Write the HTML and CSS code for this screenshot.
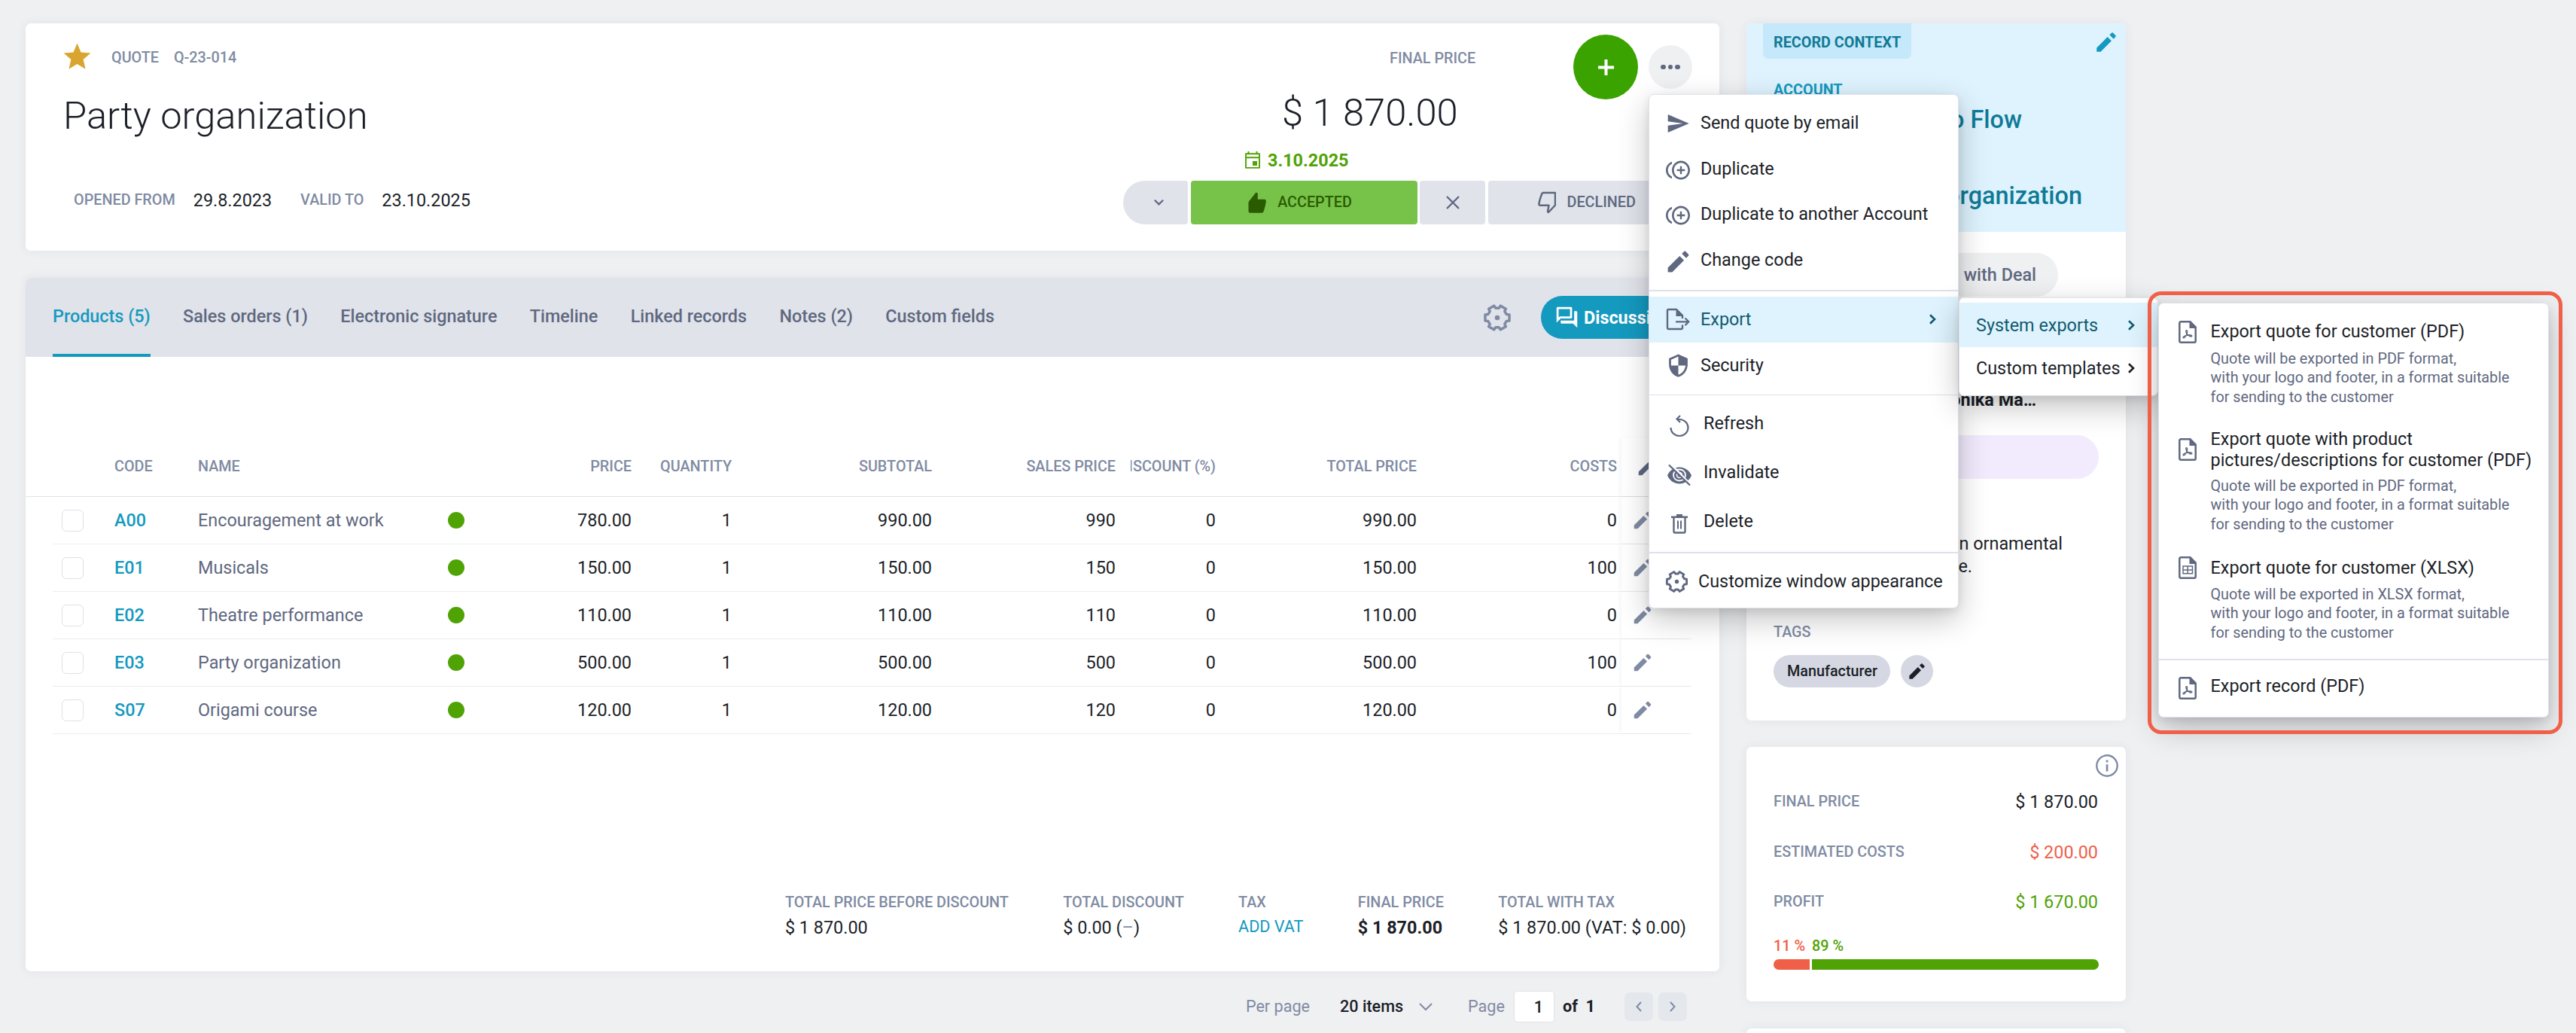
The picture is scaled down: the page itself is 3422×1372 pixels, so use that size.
FILE: index.html
```html
<!DOCTYPE html>
<html lang="en">
<head>
<meta charset="utf-8">
<title>Party organization</title>
<link rel="stylesheet" href="styles.css">
</head>
<body>
<svg class="defs" width="0" height="0">
  <symbol id="i-star" viewBox="0 0 24 24"><path d="M12 17.27L18.18 21l-1.64-7.03L22 9.24l-7.19-.61L12 2 9.19 8.63 2 9.24l5.46 4.73L5.82 21z"/></symbol>
  <symbol id="i-edit" viewBox="0 0 24 24"><path d="M3 17.25V21h3.75L16.9 10.85 13.15 7.1zM20.71 7.04c.39-.39.39-1.02 0-1.41l-2.34-2.34c-.39-.39-1.02-.39-1.41 0l-1.9 1.9 3.75 3.75z"/></symbol>
  <symbol id="i-send" viewBox="0 0 24 24"><path d="M2.01 21L23 12 2.01 3 2 10l15 2-15 2z"/></symbol>
  <symbol id="i-dup" viewBox="0 0 24 24"><path d="M15.9 8h-1.8v3.1H11v1.8h3.1V16h1.8v-3.1H19v-1.8h-3.1zM2 12c0-2.79 1.64-5.2 4.01-6.32V3.52C2.52 4.76 0 8.09 0 12s2.52 7.24 6.01 8.48v-2.16C3.64 17.2 2 14.79 2 12zm13-9.4c-4.96 0-9 4.24-9 9.4s4.04 9.4 9 9.4 9-4.24 9-9.4-4.04-9.4-9-9.4zm0 16.8c-3.86 0-7-3.34-7-7.4s3.14-7.4 7-7.4 7 3.34 7 7.4-3.14 7.4-7 7.4z"/></symbol>
  <symbol id="i-shield" viewBox="0 0 24 24"><path d="M12 1L3 5v6c0 5.55 3.84 10.74 9 12 5.16-1.26 9-6.45 9-12V5l-9-4zm0 10.99h7c-.53 4.12-3.28 7.79-7 8.94V12H5V6.3l7-3.11v8.8z"/></symbol>
  <symbol id="i-export" viewBox="0 0 32 30"><path d="M22 22.5v4a1.5 1.5 0 0 1-1.500 1.500H3.500A1.500 1.500 0 0 1 2 26.500V3.500A1.500 1.500 0 0 1 3.500 2H14l8 8v4" fill="none" stroke="currentColor" stroke-width="2.400"/><path d="M13.500 1.500l9.500 9.500h-9.500z"/><path d="M13 18.300h17M25.500 13.500l4.800 4.800-4.800 4.800" fill="none" stroke="currentColor" stroke-width="2.200"/></symbol>
  <symbol id="i-refresh" viewBox="0 0 26 30"><path d="M1.500 17a11.500 11 0 1 0 11.500-11h-3M14 1L9.500 5.500l4.500 4.500" fill="none" stroke="currentColor" stroke-width="2.200"/></symbol>
  <symbol id="i-hide" viewBox="0 0 32 30"><path d="M0 15.500C3 8.500 9 4.500 16 4.500s13 4 16 11c-3 7-9 11-16 11s-13-4-16-11z"/><ellipse cx="16" cy="15" rx="8" ry="7.500" fill="none" stroke="#fff" stroke-width="1.800"/><ellipse cx="16" cy="15" rx="3.500" ry="3.500" fill="none" stroke="#fff" stroke-width="1.600"/><path d="M5 1l26 27" stroke="#fff" stroke-width="3"/><path d="M2 1.500l28 27" stroke="currentColor" stroke-width="2.400"/></symbol>
  <symbol id="i-trash" viewBox="0 0 22 26"><path d="M0 3.800h22M7 1.300h8M3.500 4v19a1.500 1.500 0 0 0 1.500 1.500h12a1.500 1.500 0 0 0 1.500-1.500V4" fill="none" stroke="currentColor" stroke-width="2.400"/><path d="M9 8.500v11M13 8.500v11" stroke="currentColor" stroke-width="2"/></symbol>
  <symbol id="i-gear" viewBox="-12 -12 24 24"><path d="M10.140-2.600V2.600L7.700 2.900 6.200 5.300 7.200 7.420 2.800 10 1.300 8.100H-1.300L-2.800 10-7.200 7.420-6.200 5.300-7.700 2.900-10.140 2.600V-2.600L-7.700-2.900-6.200-5.300-7.200-7.420-2.800-10-1.300-8.100H1.300L2.800-10 7.200-7.420 6.200-5.300 7.700-2.900z" fill="none" stroke="currentColor" stroke-width="2.200" stroke-linejoin="round"/><circle r="2.100"/></symbol>
  <symbol id="i-pdf" viewBox="0 0 24 30"><path d="M1.300 3A1.700 1.700 0 0 1 3 1.300h12.500l7.200 7.200V27a1.700 1.700 0 0 1-1.700 1.700H3A1.700 1.700 0 0 1 1.300 27z" fill="none" stroke="currentColor" stroke-width="2.500"/><path d="M14.500 1l9 9h-9z"/><path d="M11.300 17.500C9.600 15.200 9.300 13 10.400 12.700c1.400-.2 1.600 2.300.6 4.900-1 2.500-2.700 5-4.100 5.200-1.400 0-1-1.700 1.400-2.600 2.200-.9 5.500-1.400 7.700-1.200 2 .2 2.400 1.700 1 1.900-1.700.2-4-1.300-5.700-3.400z" fill="none" stroke="currentColor" stroke-width="1.400"/></symbol>
  <symbol id="i-xls" viewBox="0 0 24 30"><path d="M1.300 3A1.700 1.700 0 0 1 3 1.300h12.500l7.200 7.200V27a1.700 1.700 0 0 1-1.700 1.700H3A1.700 1.700 0 0 1 1.300 27z" fill="none" stroke="currentColor" stroke-width="2.500"/><path d="M14.500 1l9 9h-9z"/><path d="M6 13h12.500v9.800H6zM12.200 13v9.800M6 17.900h12.500" fill="none" stroke="currentColor" stroke-width="1.500"/></symbol>
  <symbol id="i-right" viewBox="0 0 10 14"><path d="M2 1.200L8 7l-6 5.800" fill="none" stroke="currentColor" stroke-width="2.600"/></symbol>
  <symbol id="i-forum" viewBox="0 0 24 24"><path d="M15 4v7H5.170L4 12.170V4h11m1-2H3c-.55 0-1 .45-1 1v14l4-4h10c.55 0 1-.45 1-1V3c0-.55-.45-1-1-1zm5 4h-2v9H6v2c0 .55.45 1 1 1h11l4 4V7c0-.55-.45-1-1-1z"/></symbol>
  <symbol id="i-cal" viewBox="0 0 22 24"><path d="M2 3.300h18v18.600H2zM2 8.300h18M5.500 0v3.500M16.500 0v3.500" fill="none" stroke="currentColor" stroke-width="1.900" stroke-linejoin="round"/><path d="M11 13h6v6h-6z"/></symbol>
  <symbol id="i-up" viewBox="0 0 24 29"><path d="M1 13L10.500 1l2.300 1.200v8H21.500c1.600 0 2.500 1.200 2.300 2.800-.5 5-1.700 9-3.300 13.500-.5 1-1.200 1.700-2.500 1.700H3a2.500 2.500 0 0 1-2.500-2.500V15c0-.8.1-1.400.5-2z"/></symbol>
  <symbol id="i-down" viewBox="0 0 24 30"><path d="M7.500 2H23v16.500L14 28l-1-1 1.500-8.200H3a1.600 1.600 0 0 1-1.600-1.800C2 12 3.500 8 5.200 3.500 5.600 2.500 6.300 2 7.500 2z" fill="none" stroke="currentColor" stroke-width="2.500" stroke-linejoin="round"/></symbol>
  <symbol id="i-info" viewBox="0 0 30 30"><circle cx="15" cy="15" r="13.700" fill="none" stroke="currentColor" stroke-width="2.400"/><path d="M13.700 13.200h2.700v9.300h-2.700zM13.700 7.500h2.700v2.900h-2.700z"/></symbol>
</svg>

<div class="page">
  <main class="main">
    <header class="card record">
      <div class="record-info">
        <div class="record-kind"><svg class="star"><use href="#i-star"/></svg><span>QUOTE</span><span class="record-code">Q-23-014</span></div>
        <h1>Party organization</h1>
        <div class="dates"><span class="label">OPENED FROM</span><b>29.8.2023</b><span class="label valid">VALID TO</span><b>23.10.2025</b></div>
      </div>
      <div class="record-state">
        <div class="state-top">
          <div class="prices">
            <div class="label price-label">FINAL PRICE</div>
            <div class="price">$ 1 870.00</div>
            <div class="due"><svg class="cal"><use href="#i-cal"/></svg>3.10.2025</div>
          </div>
          <div class="actions">
            <button class="add"><svg viewBox="0 0 24 24"><path d="M12 1v22M1 12h22"/></svg></button>
            <button class="more"><i></i><i></i><i></i></button>
          </div>
        </div>
        <div class="stages">
          <div class="stage first"><svg class="v" viewBox="0 0 16 10"><path d="M2 1.500l6 6 6-6"/></svg></div>
          <div class="stage accepted"><svg class="thumb"><use href="#i-up"/></svg>ACCEPTED</div>
          <div class="stage cross"><svg viewBox="0 0 18 18"><path d="M1 1l16 16M17 1L1 17"/></svg></div>
          <div class="stage declined"><svg class="thumb"><use href="#i-down"/></svg>DECLINED</div>
        </div>
      </div>
    </header>

    <section class="card products">
      <nav class="tabs">
        <a class="active">Products (5)</a><a>Sales orders (1)</a><a>Electronic signature</a><a>Timeline</a><a>Linked records</a><a>Notes (2)</a><a>Custom fields</a>
        <svg class="gear"><use href="#i-gear"/></svg>
        <button class="discussion"><svg><use href="#i-forum"/></svg>Discussion</button>
      </nav>
      <div class="grid-head">
        <span></span><span>CODE</span><span>NAME</span><span></span><span class="n">PRICE</span><span class="n">QUANTITY</span><span class="n">SUBTOTAL</span><span class="n">SALES PRICE</span><span class="n clip">DISCOUNT (%)</span><span class="n">TOTAL PRICE</span><span class="n">COSTS</span><span class="edit"><svg><use href="#i-edit"/></svg></span>
      </div>
      <div class="grid-body">
        <div class="row"><i class="check"></i><a>A00</a><span class="name">Encouragement at work</span><i class="dot"></i><span class="n">780.00</span><span class="n">1</span><span class="n">990.00</span><span class="n">990</span><span class="n">0</span><span class="n">990.00</span><span class="n">0</span><span class="edit"><svg><use href="#i-edit"/></svg></span></div>
        <div class="row"><i class="check"></i><a>E01</a><span class="name">Musicals</span><i class="dot"></i><span class="n">150.00</span><span class="n">1</span><span class="n">150.00</span><span class="n">150</span><span class="n">0</span><span class="n">150.00</span><span class="n">100</span><span class="edit"><svg><use href="#i-edit"/></svg></span></div>
        <div class="row"><i class="check"></i><a>E02</a><span class="name">Theatre performance</span><i class="dot"></i><span class="n">110.00</span><span class="n">1</span><span class="n">110.00</span><span class="n">110</span><span class="n">0</span><span class="n">110.00</span><span class="n">0</span><span class="edit"><svg><use href="#i-edit"/></svg></span></div>
        <div class="row"><i class="check"></i><a>E03</a><span class="name">Party organization</span><i class="dot"></i><span class="n">500.00</span><span class="n">1</span><span class="n">500.00</span><span class="n">500</span><span class="n">0</span><span class="n">500.00</span><span class="n">100</span><span class="edit"><svg><use href="#i-edit"/></svg></span></div>
        <div class="row"><i class="check"></i><a>S07</a><span class="name">Origami course</span><i class="dot"></i><span class="n">120.00</span><span class="n">1</span><span class="n">120.00</span><span class="n">120</span><span class="n">0</span><span class="n">120.00</span><span class="n">0</span><span class="edit"><svg><use href="#i-edit"/></svg></span></div>
      </div>
      <dl class="totals">
        <div><dt>TOTAL PRICE BEFORE DISCOUNT</dt><dd>$ 1 870.00</dd></div>
        <div><dt>TOTAL DISCOUNT</dt><dd>$ 0.00 (<span class="dash">–</span>)</dd></div>
        <div><dt>TAX</dt><dd><a>ADD VAT</a></dd></div>
        <div><dt>FINAL PRICE</dt><dd class="strong">$ 1 870.00</dd></div>
        <div><dt>TOTAL WITH TAX</dt><dd>$ 1 870.00 (VAT: $ 0.00)</dd></div>
      </dl>
    </section>

    <footer class="pager">
      <span>Per page</span><b>20 items</b>
      <svg class="v" viewBox="0 0 20 12"><path d="M2 2l8 8 8-8"/></svg>
      <span class="pg">Page</span><span class="pageno">1</span><b class="of">of&nbsp; 1</b>
      <button><svg viewBox="0 0 10 14"><path d="M8 1L2.500 7 8 13"/></svg></button>
      <button><svg viewBox="0 0 10 14"><path d="M2 1l5.500 6L2 13"/></svg></button>
    </footer>
  </main>

  <aside class="side">
    <section class="card context">
      <div class="context-top">
        <div class="context-head"><span class="badge">RECORD CONTEXT</span><svg><use href="#i-edit"/></svg></div>
        <div class="ctx-label">ACCOUNT</div>
        <div class="ctx-name flow">to Flow</div>
        <div class="ctx-name deal">Party organization</div>
      </div>
      <div class="link-pill">with Deal</div>
      <div class="owner">Veronika Ma…</div>
      <div class="status-pill"></div>
      <p class="note"><span>an ornamental</span><span class="tail">tree.</span></p>
      <div class="label tags-label">TAGS</div>
      <div class="tags"><span class="tag">Manufacturer</span><span class="tag-edit"><svg><use href="#i-edit"/></svg></span></div>
    </section>
    <section class="card profit">
      <svg class="info"><use href="#i-info"/></svg>
      <div class="line"><span>FINAL PRICE</span><b>$ 1 870.00</b></div>
      <div class="line"><span>ESTIMATED COSTS</span><b class="red">$ 200.00</b></div>
      <div class="line"><span>PROFIT</span><b class="green">$ 1 670.00</b></div>
      <div class="split percents"><span class="red">11 %</span><span class="green">89 %</span></div>
      <div class="split bar"><i></i><i></i></div>
    </section>
    <section class="card next"></section>
  </aside>
</div>

<ul class="menu menu-main">
  <li><svg class="send"><use href="#i-send"/></svg>Send quote by email</li>
  <li><svg class="dup"><use href="#i-dup"/></svg>Duplicate</li>
  <li><svg class="dup"><use href="#i-dup"/></svg>Duplicate to another Account</li>
  <li><svg class="pen"><use href="#i-edit"/></svg>Change code</li>
  <li class="sep"></li>
  <li class="on"><svg class="exp"><use href="#i-export"/></svg>Export<svg class="go"><use href="#i-right"/></svg></li>
  <li><svg class="shield"><use href="#i-shield"/></svg>Security</li>
  <li class="sep thin"></li>
  <li class="tall"><svg class="refresh"><use href="#i-refresh"/></svg>Refresh</li>
  <li class="tall"><svg class="hide"><use href="#i-hide"/></svg>Invalidate</li>
  <li class="tall"><svg class="trash"><use href="#i-trash"/></svg>Delete</li>
  <li class="sep last"></li>
  <li class="custom"><svg class="cog"><use href="#i-gear"/></svg>Customize window appearance</li>
</ul>

<ul class="menu menu-export">
  <li class="on">System exports<svg class="go"><use href="#i-right"/></svg></li>
  <li>Custom templates<svg class="go"><use href="#i-right"/></svg></li>
</ul>

<div class="menu menu-formats">
  <article class="one"><svg><use href="#i-pdf"/></svg><div><h3>Export quote for customer (PDF)</h3><p>Quote will be exported in PDF format,<br>with your logo and footer, in a format suitable<br>for sending to the customer</p></div></article>
  <article class="two"><svg><use href="#i-pdf"/></svg><div><h3>Export quote with product<br>pictures/descriptions for customer (PDF)</h3><p>Quote will be exported in PDF format,<br>with your logo and footer, in a format suitable<br>for sending to the customer</p></div></article>
  <article class="three"><svg><use href="#i-xls"/></svg><div><h3>Export quote for customer (XLSX)</h3><p>Quote will be exported in XLSX format,<br>with your logo and footer, in a format suitable<br>for sending to the customer</p></div></article>
  <article class="four"><svg><use href="#i-pdf"/></svg><div><h3>Export record (PDF)</h3></div></article>
</div>
<div class="highlight"></div>
</body>
</html>
```
FILE: styles.css
```css
* { box-sizing: border-box; margin: 0; padding: 0; }
html, body { width: 3422px; height: 1372px; overflow: hidden; }
body { position: relative; background: #eff0f2; color: #1c1f28; font: 400 23.4px/30px Roboto, "Liberation Sans", sans-serif; }
svg { fill: currentColor; flex: none; display: block; }
button { border: 0; font: inherit; color: inherit; }
b { font-weight: 500; }
i { display: block; }
.defs { position: absolute; }
.red { color: #f05f48 !important; }
.green { color: #50a305 !important; }
.label { font-size: 19.8px; font-weight: 500; color: #7f8ba3; }

.page { display: grid; grid-template-columns: 2250px 504px; column-gap: 36px; padding: 31px 34px 0; height: 1372px; overflow: hidden; }
.card { background: #fff; border-radius: 7px; box-shadow: 0 0 14px rgba(40, 60, 90, .07); }

/* record header */
.record { height: 302px; display: flex; justify-content: space-between; padding: 0 35px 0 49px; }
.record-kind { display: flex; align-items: center; height: 46px; margin-top: 23px; font-size: 19.8px; font-weight: 500; color: #7f8ba3; }
.star { width: 43px; height: 43px; margin: -3px 24px 0 -2px; color: #daa52f; }
.record-code { margin-left: 20px; }
h1 { font-size: 50.7px; font-weight: 300; line-height: 60px; margin: 24px 0 67px 1px; }
.dates { display: flex; align-items: center; height: 30px; padding-left: 15px; }
.dates b { font-weight: 400; margin-left: 24px; }
.dates .valid { margin-left: 38px; }
.record-state { width: 757px; padding-top: 15px; }
.state-top { display: flex; justify-content: space-between; height: 194px; }
.price-label { margin: 17px 0 27px 354px; }
.price { font-size: 50.7px; font-weight: 300; line-height: 60px; margin-left: 211px; }
.due { display: flex; align-items: center; height: 30px; margin: 18px 0 0 161px; font-weight: 700; color: #50a305; }
.cal { width: 22px; height: 24px; margin-right: 9px; }
.actions { display: flex; gap: 14px; align-items: center; height: 86px; margin-right: 1px; }
.add { display: flex; align-items: center; justify-content: center; width: 86px; height: 86px; border-radius: 50%; background: #3aa300; }
.add svg { width: 23px; height: 23px; stroke: #fff; stroke-width: 4.200; }
.more { display: flex; align-items: center; justify-content: center; gap: 3px; width: 58px; height: 58px; border-radius: 50%; background: #eff0f2; }
.more i { width: 6.500px; height: 6.500px; border-radius: 50%; background: #5f6880; }
.stages { display: grid; grid-template-columns: 86px 301px 87px 1fr; column-gap: 3.500px; height: 58px; font-size: 19.8px; font-weight: 500; color: #5f6880; }
.stage { display: flex; align-items: center; justify-content: center; background: #e0e3ea; border-radius: 4px; }
.stage svg { fill: none; stroke: currentColor; stroke-width: 2.400; }
.stage .thumb { width: 24px; height: 30px; stroke: none; fill: currentColor; margin-right: 15px; }
.first { border-radius: 29px 4px 4px 29px; padding-left: 8px; }
.v { width: 15px; height: 10px; }
.accepted { background: #77c34a; color: #2b5b00; padding-right: 10px; }
.cross { padding-left: 1px; }
.cross svg { width: 18px; height: 18px; }
.declined { border-radius: 4px 29px 29px 4px; padding-right: 10px; }

/* tabs */
.products { display: flex; flex-direction: column; height: 921px; margin-top: 36px; overflow: hidden; }
.tabs { display: flex; align-items: center; height: 105px; padding: 0 36px; background: #e0e3ea; }
.tabs a { height: 105px; line-height: 102px; font-weight: 500; color: #5f6880; margin-right: 43.300px; border-bottom: 4px solid transparent; }
.tabs .active { color: #1499bf; border-color: #1499bf; }
.gear { width: 38px; height: 38px; margin-left: auto; color: #7f8ba3; }
.discussion { display: flex; align-items: center; width: 201px; height: 57px; margin-left: 39px; padding-left: 18px; border-radius: 29px; background: #1499bf; color: #fff; font-weight: 700; }
.discussion svg { width: 33px; height: 33px; margin-right: 6px; }

/* product grid */
.grid-head, .row { display: grid; grid-template-columns: 82px 111px 317px 52px 207px 133px 266px 244px 133px 267px 266px 99px; align-items: center; }
.grid-head { height: 80px; margin-top: 106px; padding: 1px 37px 0 36px; border-bottom: 1px solid #dfe3e6; font-size: 19.8px; font-weight: 500; color: #7f8ba3; }
.n { text-align: right; }
.clip { display: flex; justify-content: flex-end; width: 113px; margin-left: 20px; overflow: hidden; white-space: nowrap; }
.row { height: 63px; margin: 0 37px 0 36px; border-bottom: 1px solid #ebedf0; }
.row a { color: #1499bf; font-weight: 500; }
.name { color: #5f6880; }
.check { width: 29px; height: 29px; margin-left: 12px; border: 1px solid #dfe1e8; border-radius: 6px; }
.dot { width: 22px; height: 22px; margin: 0 auto; border-radius: 50%; background: #50a305; }
.edit { display: flex; align-items: center; height: 100%; margin-left: 6px; padding-left: 13px; box-shadow: -3px 0 4px -1px rgba(40, 60, 90, .05); color: #7f8ba3; }
.edit svg { width: 30px; height: 30px; }
.grid-head .edit { color: #5f6880; padding-left: 19px; }

/* totals */
.totals { display: flex; justify-content: flex-end; gap: 72.300px; margin-top: auto; padding: 0 44px 42px; }
.totals dt { font-size: 19.8px; font-weight: 500; color: #7f8ba3; margin-bottom: 2.500px; }
.totals dd { line-height: 32px; }
.totals a { display: block; margin-top: -1px; font-size: 21.6px; color: #1499bf; }
.totals .strong { font-weight: 700; }
.dash { color: #7f8ba3; }

/* pager */
.pager { display: flex; align-items: center; height: 42px; margin-top: 26px; padding-right: 43px; justify-content: flex-end; font-size: 21.6px; font-weight: 500; color: #7f8ba3; }
.pager span:first-child { font-weight: 400; }
.pager b { color: #1c1f28; margin-left: 40px; }
.pager svg { fill: none; stroke: #7f8ba3; stroke-width: 2; }
.pager .v { width: 20px; height: 12px; margin-left: 20px; }
.pg { margin-left: 46px; font-weight: 400; }
.pageno { width: 54px; height: 42px; margin-left: 12px; padding-right: 14px; border: 1px solid #dfe3e8; border-radius: 4px; background: #fff; color: #1c1f28; line-height: 42px; text-align: right; }
.pager .of { margin: 0 39px 0 11px; font-weight: 700; }
.pager button { display: flex; align-items: center; justify-content: center; width: 38px; height: 38px; margin-right: 7px; border-radius: 7px; background: #e4e7ec; }
.pager button:last-child { margin-right: 0; }
.pager button svg { width: 10px; height: 14px; }

/* context card */
.context { height: 926px; overflow: hidden; }
.context-top { height: 277px; background: #def3fe; }
.context-head { display: flex; justify-content: space-between; height: 47px; padding: 0 9px 0 22px; }
.context-head svg { width: 34px; height: 34px; margin-top: 8px; color: #1499bf; }
.badge { height: 47px; padding: 0 14px; border-radius: 0 0 7px 7px; background: #c5e8fa; color: #107a96; font-size: 19.8px; font-weight: 700; line-height: 52px; }
.ctx-label { margin: 27px 0 0 36px; font-size: 19.8px; font-weight: 700; color: #1499bf; }
.ctx-name { font-size: 32.4px; font-weight: 500; line-height: 40px; color: #107a96; text-align: right; }
.flow { margin-top: 4px; padding-right: 138px; }
.deal { margin-top: 61px; padding-right: 58px; }
.link-pill { width: 378px; height: 58px; margin: 28px 0 0 36px; padding-right: 29px; border-radius: 29px; background: #eff0f2; color: #5f6880; font-weight: 500; line-height: 58px; text-align: right; }
.owner { margin-top: 122px; padding-right: 119px; font-weight: 700; text-align: right; }
.status-pill { height: 58px; margin: 32px 36px 0; border-radius: 29px; background: #f2ebfe; }
.note { margin-top: 71px; text-align: right; }
.note span { display: block; padding-right: 84px; }
.note .tail { padding-right: 204px; }
.tags-label { margin: 58px 0 0 36px; }
.tags { display: flex; gap: 14px; margin: 15px 0 0 36px; }
.tag { height: 43px; padding: 0 17px 0 18px; border-radius: 22px; background: #d5d8e2; font-size: 19.8px; font-weight: 500; line-height: 43px; }
.tag-edit { display: flex; align-items: center; justify-content: center; width: 43px; height: 43px; border-radius: 50%; background: #d5d8e2; }
.tag-edit svg { width: 27px; height: 27px; }

/* profit card */
.profit { position: relative; height: 338px; margin-top: 35px; padding: 40px 36px 0; }
.info { position: absolute; top: 10px; right: 10px; width: 30px; height: 30px; color: #7f8ba3; }
.line { display: flex; align-items: center; justify-content: space-between; height: 66.500px; font-size: 19.8px; font-weight: 500; color: #7f8ba3; }
.line b { font-size: 23.4px; font-weight: 400; color: #1c1f28; padding-right: 1px; }
.split { display: grid; grid-template-columns: 48px 1fr; column-gap: 3px; }
.percents { margin-top: 13px; font-size: 19.8px; font-weight: 500; line-height: 24px; white-space: nowrap; }
.bar { height: 14px; margin-top: 5px; }
.bar i { background: #50a305; border-radius: 0 7px 7px 0; }
.bar i:first-child { background: #f05f48; border-radius: 7px 0 0 7px; }
.next { height: 60px; margin-top: 36px; }

/* menus float over the page */
.menu { position: absolute; list-style: none; background: #fff; border: 1px solid #dfe2ea; border-radius: 7px; box-shadow: 0 14px 40px rgba(0, 0, 0, .24), 0 4px 12px rgba(0, 0, 0, .08); }
.menu li { display: flex; align-items: center; }
.menu .on { background: #def3fe; color: #115a6e; }
.menu .sep { height: 2px; background: #dfe2ea; }
.go { width: 10px; height: 14px; margin-left: auto; }
.menu-main { left: 2190px; top: 125px; width: 412px; height: 683px; padding-top: 7px; }
.menu-main li { height: 60.500px; padding-left: 22px; }
.menu-main li > svg:first-child { color: #5f6880; }
.menu-main .go { margin-right: 29px; }
.menu-main .sep { margin: 10px 0 7px; height: 2px; }
.menu-main .thin { height: 1px; margin: 9px 0 4px; }
.menu-main .last { margin: 9px 0 7px; }
.menu-main .tall { height: 65px; }
.send { width: 32px; height: 32px; margin: 2px 14px 0 0; }
.dup { width: 32px; height: 32px; margin: 4px 14px 0 0; }
.pen { width: 37px; height: 37px; margin: 5px 11px 0 -2px; }
.exp { width: 32px; height: 30px; margin-right: 14px; }
.shield { width: 33px; height: 33px; margin: 2px 13px 0 0; }
.refresh { width: 26px; height: 30px; margin: 9px 19px 0 5px; }
.hide { width: 32px; height: 30px; margin: 8px 16px 0 2px; }
.trash { width: 22px; height: 26px; margin: 8px 21px 0 7px; }
.cog { width: 31px; height: 31px; margin: 0 13px 0 -1px; }
.menu-export { left: 2602px; top: 395px; width: 265px; height: 131px; padding-top: 6px; }
.menu-export li { height: 59px; padding: 0 30px 0 22px; }
.menu-export li:last-child { color: inherit; height: 56px; }
.menu-formats { left: 2867px; top: 402px; width: 519px; height: 551px; padding-top: 23px; }
.menu-formats article { display: flex; padding-left: 26px; }
.menu-formats svg { width: 24px; height: 30px; margin-right: 18.500px; color: #5f6880; }
.menu-formats h3 { font-size: 23.4px; font-weight: 400; line-height: 28px; }
.menu-formats p { margin-top: 9.700px; font-size: 19.8px; line-height: 25.500px; color: #5f6880; }
.two { margin-top: 29px; }
.two svg { margin-top: 13px; }
.menu-formats .two p { margin-top: 7.500px; }
.three { margin-top: 31px; }
.three svg { margin-top: -1px; }
.menu-formats .three p { margin-top: 8.700px; }
.four { margin-top: 21.500px; border-top: 2px solid #dfe2ea; padding-top: 20px; }
.four svg { margin-top: 2px; }
.highlight { position: absolute; left: 2853px; top: 387px; width: 551px; height: 588px; border: 5px solid #f05f48; border-radius: 18px; }
```
